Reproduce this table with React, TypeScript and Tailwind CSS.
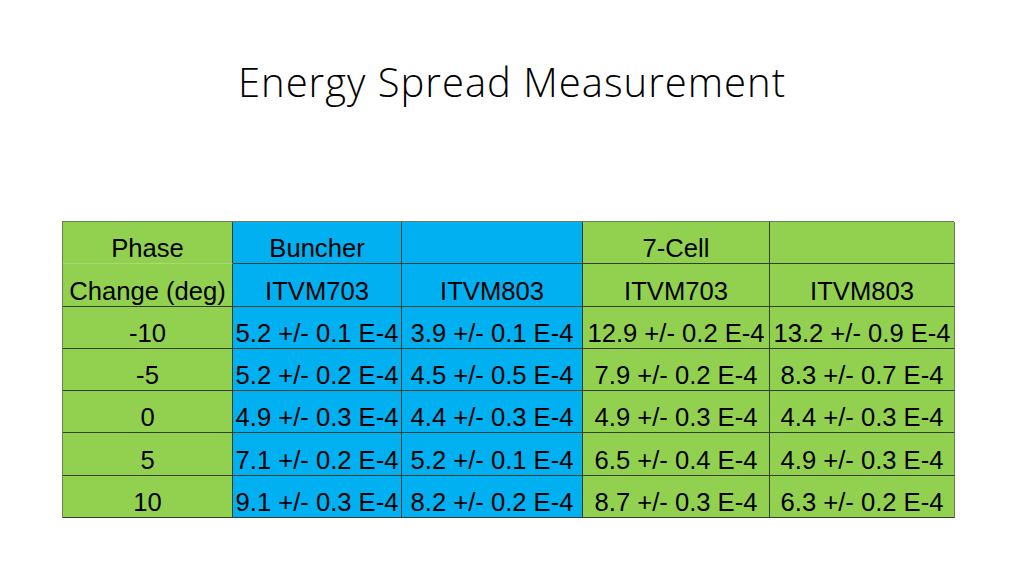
const green = "bg-[#92d050]"
const blue = "bg-[#00b0f0]"

type Cell = { text: string; bg: string; faintBottom?: boolean }

const rows: Cell[][] = [
  [
    { text: "Phase", bg: green, faintBottom: true },
    { text: "Buncher", bg: blue },
    { text: "", bg: blue },
    { text: "7-Cell", bg: green },
    { text: "", bg: green },
  ],
  [
    { text: "Change (deg)", bg: green },
    { text: "ITVM703", bg: blue },
    { text: "ITVM803", bg: blue },
    { text: "ITVM703", bg: green },
    { text: "ITVM803", bg: green },
  ],
  [
    { text: "-10", bg: green },
    { text: "5.2 +/- 0.1 E-4", bg: blue },
    { text: "3.9 +/- 0.1 E-4", bg: blue },
    { text: "12.9 +/- 0.2 E-4", bg: green },
    { text: "13.2 +/- 0.9 E-4", bg: green },
  ],
  [
    { text: "-5", bg: green },
    { text: "5.2 +/- 0.2 E-4", bg: blue },
    { text: "4.5 +/- 0.5 E-4", bg: blue },
    { text: "7.9 +/- 0.2 E-4", bg: green },
    { text: "8.3 +/- 0.7 E-4", bg: green },
  ],
  [
    { text: "0", bg: green },
    { text: "4.9 +/- 0.3 E-4", bg: blue },
    { text: "4.4 +/- 0.3 E-4", bg: blue },
    { text: "4.9 +/- 0.3 E-4", bg: green },
    { text: "4.4 +/- 0.3 E-4", bg: green },
  ],
  [
    { text: "5", bg: green },
    { text: "7.1 +/- 0.2 E-4", bg: blue },
    { text: "5.2 +/- 0.1 E-4", bg: blue },
    { text: "6.5 +/- 0.4 E-4", bg: green },
    { text: "4.9 +/- 0.3 E-4", bg: green },
  ],
  [
    { text: "10", bg: green },
    { text: "9.1 +/- 0.3 E-4", bg: blue },
    { text: "8.2 +/- 0.2 E-4", bg: blue },
    { text: "8.7 +/- 0.3 E-4", bg: green },
    { text: "6.3 +/- 0.2 E-4", bg: green },
  ],
]

export default function App() {
  return (
    <div className="w-[1024px] h-[576px] bg-white overflow-hidden flex flex-col">
      {/* Title */}
      <h1 className="pt-[58px] text-center text-[40px] leading-[48px] tracking-[1px] font-light text-black font-['Open_Sans',sans-serif]">
        Energy Spread Measurement
      </h1>

      {/* Table */}
      <div className="mt-[115px] ml-[62px] w-[892px] grid grid-cols-[170px_169px_181px_187px_185px] auto-rows-[42.3px] border-t border-l border-[#6b7f55] font-['Liberation_Sans',Arial,sans-serif] text-[25.6px] leading-[25px] text-black">
        {rows.map((row, r) =>
          row.map((cell, c) => (
            <div
              key={`${r}-${c}`}
              className={`${cell.bg} flex items-end justify-center pb-[2px] whitespace-nowrap border-r border-b ${
                cell.faintBottom ? "border-b-[#a9d77a]" : "border-b-[#34402c]"
              } ${c === 4 ? "border-r-[#6b7f55]" : "border-r-[#34402c]"} ${r === 6 ? "border-b-[#6b7f55]" : ""}`}
            >
              {cell.text}
            </div>
          ))
        )}
      </div>
    </div>
  )
}
